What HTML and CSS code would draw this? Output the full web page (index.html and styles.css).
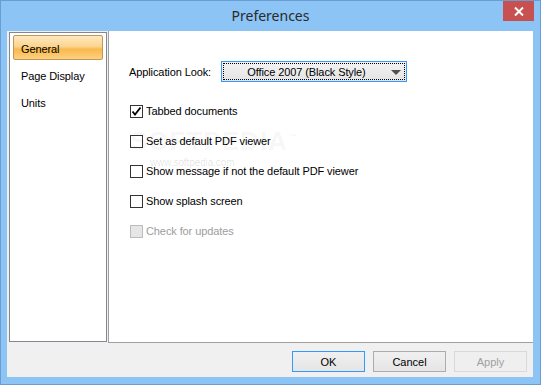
FILE: index.html
```html
<!DOCTYPE html>
<html lang="en">
<head>
    <meta charset="UTF-8">
    <title>Preferences</title>
    <link rel="stylesheet" href="styles.css">
</head>
<body>
    <div class="window">
        <div class="titlebar">
            <span></span>
            <span class="title">Preferences</span>
            <button class="close">
                <svg width="10" height="9" viewBox="0 0 10 9"><path d="M1 0.5 L9 8.5 M9 0.5 L1 8.5" stroke="#fff" stroke-width="2"/></svg>
            </button>
        </div>
        <div class="client">
            <div class="main">
                <ul class="nav">
                    <li class="active">General</li>
                    <li>Page Display</li>
                    <li>Units</li>
                </ul>
                <div class="page">
                    <div class="watermark">SOFTPEDIA<sup>™</sup></div>
                    <div class="watermark-url">www.softpedia.com</div>
                    <div class="look">
                        <label>Application Look:</label>
                        <div class="combo">
                            <div class="combo-face">
                                <span class="combo-text">Office 2007 (Black Style)</span>
                                <span class="arrow"></span>
                            </div>
                        </div>
                    </div>
                    <div class="checks">
                        <div class="check">
                            <span class="box"><svg width="11" height="11" viewBox="0 0 11 11"><path d="M1.5 5.5 L4 8.5 L9.5 1.5" fill="none" stroke="#000" stroke-width="1.8"/></svg></span>
                            Tabbed documents
                        </div>
                        <div class="check"><span class="box"></span>Set as default PDF viewer</div>
                        <div class="check"><span class="box"></span>Show message if not the default PDF viewer</div>
                        <div class="check"><span class="box"></span>Show splash screen</div>
                        <div class="check disabled"><span class="box"></span>Check for updates</div>
                    </div>
                </div>
            </div>
            <div class="buttons">
                <button class="btn default">OK</button>
                <button class="btn">Cancel</button>
                <button class="btn" disabled>Apply</button>
            </div>
        </div>
    </div>
</body>
</html>
```
FILE: styles.css
```css
body {
    margin: 0;
    font-family: 'Liberation Sans', Arial, sans-serif;
    font-size: 11px;
    letter-spacing: -0.1px;
    color: #000;
}

.window {
    width: 541px;
    height: 385px;
    box-sizing: border-box;
    background: #8bc4f5;
    border: 1px solid #6c9dd0;
    display: flex;
    flex-direction: column;
}

.titlebar {
    height: 30px;
    display: grid;
    grid-template-columns: 1fr auto 1fr;
    align-items: start;
}

.title {
    font-family: 'Noto Sans', sans-serif;
    font-size: 14px;
    letter-spacing: 0;
    color: #2a2a2a;
    line-height: 30px;
}

.close {
    justify-self: end;
    width: 31px;
    height: 20px;
    margin-right: 6px;
    padding: 0;
    border: none;
    background: #c75050;
    display: flex;
    align-items: center;
    justify-content: center;
}

.client {
    margin: 0 7px 7px 6px;
    height: 346px;
    background: #f0f0f0;
    display: flex;
    flex-direction: column;
}

.main {
    display: flex;
    align-items: flex-start;
    height: 312px;
}

.nav {
    list-style: none;
    margin: 1px 1px 0 2px;
    padding: 2px 3px;
    width: 98px;
    height: 310px;
    box-sizing: border-box;
    background: #fff;
    border: 1px solid #828790;
}

.nav li {
    height: 25px;
    line-height: 24px;
    padding-top: 1px;
    box-sizing: border-box;
    padding-left: 7px;
    margin-bottom: 2px;
    border: 1px solid transparent;
    border-radius: 2px;
}

.nav li.active {
    border-color: #c39558;
    background: linear-gradient(#fee9c0, #fcd590 45%, #f9b94e 58%, #fbd27f);
}

.page {
    position: relative;
    flex: 1;
    height: 312px;
    box-sizing: border-box;
    background: #fff;
    border-left: 1px solid #a0a0a0;
    border-bottom: 1px solid #a0a0a0;
    padding: 30px 0 0 20px;
}

.look {
    display: flex;
    align-items: center;
}

.look label {
    width: 92px;
}

.combo {
    width: 186px;
    height: 21px;
    box-sizing: border-box;
    border: 1px solid #3399ff;
    background: linear-gradient(#f3f3f3, #e4e4e4);
    padding: 1px;
}

.combo-face {
    height: 100%;
    box-sizing: border-box;
    border: 1px dotted #000;
    display: flex;
    align-items: center;
}

.combo-text {
    flex: 1;
    text-align: center;
    padding-left: 2px;
}

.arrow {
    width: 0;
    height: 0;
    border-left: 5px solid transparent;
    border-right: 5px solid transparent;
    border-top: 5px solid #505050;
    margin: 1px 3px 0 4px;
}

.checks {
    margin-top: 14px;
    padding-left: 1px;
}

.check {
    height: 30px;
    display: flex;
    align-items: center;
}

.box {
    width: 13px;
    height: 13px;
    box-sizing: border-box;
    border: 1px solid #333;
    background: #fff;
    margin-right: 3px;
    display: flex;
    align-items: center;
    justify-content: center;
}

.check.disabled {
    color: #9d9d9d;
}

.check.disabled .box {
    border-color: #bcbcbc;
    background: #e6e6e6;
}

.watermark {
    position: absolute;
    left: 21px;
    top: 95px;
    font-size: 26px;
    font-weight: bold;
    letter-spacing: 1px;
    color: rgba(0, 0, 0, 0.05);
}

.watermark sup {
    font-size: 9px;
}

.watermark-url {
    position: absolute;
    left: 41px;
    top: 126px;
    font-size: 10px;
    color: rgba(0, 0, 0, 0.12);
}

.buttons {
    display: flex;
    justify-content: flex-end;
    gap: 8px;
    padding: 8px 6px 0 0;
}

.btn {
    width: 73px;
    height: 21px;
    padding: 0;
    font-family: 'Liberation Sans', Arial, sans-serif;
    font-size: 11px;
    color: #000;
    border: 1px solid #acacac;
    background: linear-gradient(#f0f0f0, #e5e5e5);
}

.btn.default {
    border-color: #3399ff;
}

.btn:disabled {
    color: #a0a0a0;
    border-color: #d9d9d9;
    background: #efefef;
}
```
